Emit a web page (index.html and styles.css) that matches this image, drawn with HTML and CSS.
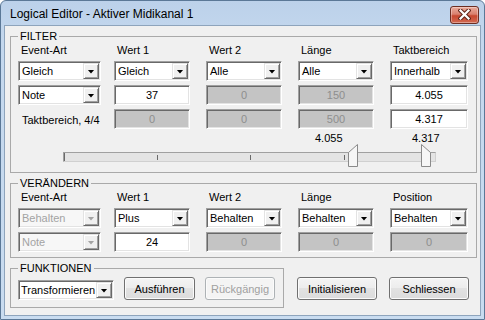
FILE: index.html
```html
<!DOCTYPE html>
<html lang="de">
<head>
  <meta charset="UTF-8">
  <title>Logical Editor</title>
  <link rel="stylesheet" href="styles.css">
</head>
<body>
  <div class="window">
    <div class="titlebar">
      <span class="title">Logical Editor - Aktiver Midikanal 1</span>
      <button class="close" title="Schliessen">
        <svg width="13" height="11" viewBox="0 0 13 11">
          <path d="M2.5 1.5 L10.5 9.5 M10.5 1.5 L2.5 9.5" stroke="#5e2418" stroke-width="4.2" stroke-linecap="square"/>
          <path d="M2.5 1.5 L10.5 9.5 M10.5 1.5 L2.5 9.5" stroke="#fff" stroke-width="2.2" stroke-linecap="square"/>
        </svg>
      </button>
    </div>

    <div class="client">
      <fieldset class="group filter">
        <legend>FILTER</legend>
        <div class="grid">
          <span class="head">Event-Art</span>
          <span class="head">Wert 1</span>
          <span class="head">Wert 2</span>
          <span class="head">Länge</span>
          <span class="head">Taktbereich</span>

          <div class="combo wide"><span class="combo-text">Gleich</span><span class="combo-btn"></span></div>
          <div class="combo"><span class="combo-text">Gleich</span><span class="combo-btn"></span></div>
          <div class="combo"><span class="combo-text">Alle</span><span class="combo-btn"></span></div>
          <div class="combo"><span class="combo-text">Alle</span><span class="combo-btn"></span></div>
          <div class="combo last"><span class="combo-text">Innerhalb</span><span class="combo-btn"></span></div>

          <div class="combo wide"><span class="combo-text">Note</span><span class="combo-btn"></span></div>
          <div class="edit">37</div>
          <div class="edit disabled">0</div>
          <div class="edit disabled">150</div>
          <div class="edit last">4.055</div>

          <span class="note">Taktbereich, 4/4</span>
          <div class="edit disabled">0</div>
          <div class="edit disabled">0</div>
          <div class="edit disabled">500</div>
          <div class="edit last">4.317</div>
        </div>

        <div class="slider">
          <span class="slider-value" style="left: 297px">4.055</span>
          <span class="slider-value" style="left: 394px">4.317</span>
          <div class="track">
            <span class="tick first" style="left: 0px"></span>
            <span class="tick" style="left: 93px"></span>
            <span class="tick" style="left: 186px"></span>
            <span class="tick" style="left: 280px"></span>
          </div>
          <svg class="thumb" style="left: 330px" width="10" height="23" viewBox="0 0 10 23">
            <polygon points="0.5,8.5 9.5,0.5 9.5,22.5 0.5,22.5" fill="#f6f6f6" stroke="#8a8a8a"/>
          </svg>
          <svg class="thumb" style="left: 403px" width="10" height="23" viewBox="0 0 10 23">
            <polygon points="0.5,0.5 9.5,8.5 9.5,22.5 0.5,22.5" fill="#f6f6f6" stroke="#8a8a8a"/>
          </svg>
        </div>
      </fieldset>

      <fieldset class="group change">
        <legend>VERÄNDERN</legend>
        <div class="grid">
          <span class="head">Event-Art</span>
          <span class="head">Wert 1</span>
          <span class="head">Wert 2</span>
          <span class="head">Länge</span>
          <span class="head">Position</span>

          <div class="combo wide disabled"><span class="combo-text">Behalten</span><span class="combo-btn"></span></div>
          <div class="combo"><span class="combo-text">Plus</span><span class="combo-btn"></span></div>
          <div class="combo"><span class="combo-text">Behalten</span><span class="combo-btn"></span></div>
          <div class="combo"><span class="combo-text">Behalten</span><span class="combo-btn"></span></div>
          <div class="combo last"><span class="combo-text">Behalten</span><span class="combo-btn"></span></div>

          <div class="combo wide disabled"><span class="combo-text">Note</span><span class="combo-btn"></span></div>
          <div class="edit">24</div>
          <div class="edit disabled">0</div>
          <div class="edit disabled">0</div>
          <div class="edit disabled last">0</div>
        </div>
      </fieldset>

      <div class="bottom">
        <fieldset class="group functions">
          <legend>FUNKTIONEN</legend>
          <div class="func-row">
            <div class="combo func"><span class="combo-text">Transformieren</span><span class="combo-btn"></span></div>
            <button class="btn run">Ausführen</button>
            <button class="btn" disabled>Rückgängig</button>
          </div>
        </fieldset>
        <button class="btn outer init">Initialisieren</button>
        <button class="btn outer">Schliessen</button>
      </div>
    </div>
  </div>
</body>
</html>
```

FILE: styles.css
```css
body {
  margin: 0;
  font-family: "Liberation Sans", Arial, sans-serif;
  font-size: 11px;
  color: #000;
  background: #fff;
}
.window {
  width: 485px;
  height: 320px;
  box-sizing: border-box;
  border: 1px solid #5b7897;
  border-radius: 6px 6px 0 0;
  padding: 0 3px 3px 3px;
  background: linear-gradient(to bottom, #bcd1ea, #c4d8ee 40px, #c9dcf0);
  overflow: hidden;
}
.titlebar {
  height: 24px;
  display: flex;
  align-items: center;
  justify-content: space-between;
}
.title {
  font-size: 12px;
  padding-left: 6px;
  margin-top: 2px;
  color: #000;
}
.close {
  width: 29px;
  height: 18px;
  margin: 3px 2px 0 0;
  padding: 0;
  border: 1px solid #6b2d22;
  border-radius: 3px;
  background: linear-gradient(to bottom, #e9ab9c, #d9806e 45%, #c7472f 55%, #d26a52);
  box-shadow: inset 0 0 0 1px rgba(255, 255, 255, 0.35);
  display: flex;
  align-items: center;
  justify-content: center;
}
.client {
  height: 291px;
  box-sizing: border-box;
  border: 1px solid #8ea4bc;
  background: #f0f0f0;
  display: flex;
  flex-direction: column;
}

/* group boxes */
.group {
  margin: 0 0 0 5px;
  padding: 1px 7px 5px 7px;
  border: 1px solid #a9a9a9;
  border-radius: 0;
  min-width: 0;
}
.group legend {
  padding: 0 2px;
  line-height: 13px;
  font-size: 11px;
}
.filter {
  width: 467px;
  box-sizing: border-box;
  margin-top: 4px;
}
.change {
  width: 467px;
  box-sizing: border-box;
  margin-top: 4px;
  padding-top: 1px;
}

.grid {
  display: grid;
  grid-template-columns: 96px 92px 92px 92px 78px;
  row-gap: 4px;
}
.head {
  line-height: 13px;
  padding-left: 3px;
}
.note {
  padding: 5px 0 0 4px;
  line-height: 13px;
}

/* combo boxes and edits */
.combo, .edit {
  box-sizing: border-box;
  width: 76px;
  height: 20px;
  border: 1px solid;
  border-color: #a0a0a0 #fff #fff #a0a0a0;
  box-shadow: inset 1px 1px 0 #696969, inset -1px -1px 0 #e3e3e3;
  background: #fff;
}
.combo {
  display: flex;
  padding: 1px;
}
.combo.wide {
  width: 83px;
}
.combo.last, .edit.last {
  width: 78px;
}
.combo-text {
  flex: 1;
  min-width: 0;
  line-height: 16px;
  padding-left: 2px;
  white-space: nowrap;
  overflow: hidden;
}
.combo-btn {
  flex: none;
  width: 16px;
  height: 16px;
  box-sizing: border-box;
  border: 1px solid;
  border-color: #e3e3e3 #696969 #696969 #e3e3e3;
  box-shadow: inset 1px 1px 0 #fff, inset -1px -1px 0 #a0a0a0;
  background: #f0f0f0;
  display: flex;
  align-items: center;
  justify-content: center;
}
.combo-btn::after {
  content: "";
  width: 7px;
  height: 4px;
  margin-top: 1px;
  background: #000;
  clip-path: polygon(0 0, 100% 0, 50% 100%);
}
.combo.disabled {
  background: #f7f7f7;
}
.combo.disabled .combo-text {
  color: #a3a3a3;
}
.combo.disabled .combo-btn::after {
  background: #a3a3a3;
}
.edit {
  text-align: center;
  line-height: 18px;
}
.edit.disabled {
  background: #c4c4c4;
  color: #8e8e8e;
}

/* range slider */
.slider {
  position: relative;
  height: 15px;
  padding-top: 21px;
  margin-top: 2px;
}
.slider-value {
  position: absolute;
  top: 1px;
  line-height: 13px;
}
.track {
  position: relative;
  margin-left: 45px;
  width: 373px;
  height: 10px;
  box-sizing: border-box;
  border: 1px solid;
  border-color: #a0a0a0 #d0d0d0 #d0d0d0 #a0a0a0;
  background: #e4e4e4;
}
.tick {
  position: absolute;
  top: 2px;
  width: 1px;
  height: 5px;
  background: #6a6a6a;
}
.tick.first {
  top: 0;
  height: 8px;
  left: -1px;
}
.thumb {
  position: absolute;
  top: 13px;
}

/* bottom row */
.bottom {
  display: flex;
  align-items: flex-end;
  margin-top: 4px;
}
.functions {
  width: 274px;
  box-sizing: border-box;
  padding: 2px 8px 7px 7px;
}
.func-row {
  display: flex;
  align-items: flex-end;
}
.combo.func {
  width: 96px;
}
.combo.func .combo-text {
  padding-left: 1px;
}
.btn {
  font-family: "Liberation Sans", Arial, sans-serif;
  font-size: 11px;
  color: #000;
  width: 71px;
  height: 23px;
  padding: 0;
  margin-left: 10px;
  border: 1px solid #707070;
  border-radius: 3px;
  background: linear-gradient(to bottom, #f4f4f4, #ececec 50%, #e2e2e2 50%, #dcdcdc);
  box-shadow: inset 0 0 0 1px #fbfbfb;
}
.btn:disabled {
  color: #a0a0a0;
  border-color: #adb2b5;
  background: #f4f4f4;
  width: 70px;
}
.btn.outer {
  width: 80px;
  margin-bottom: 8px;
  margin-left: 12px;
}
.btn.init {
  margin-left: 13px;
}
```
